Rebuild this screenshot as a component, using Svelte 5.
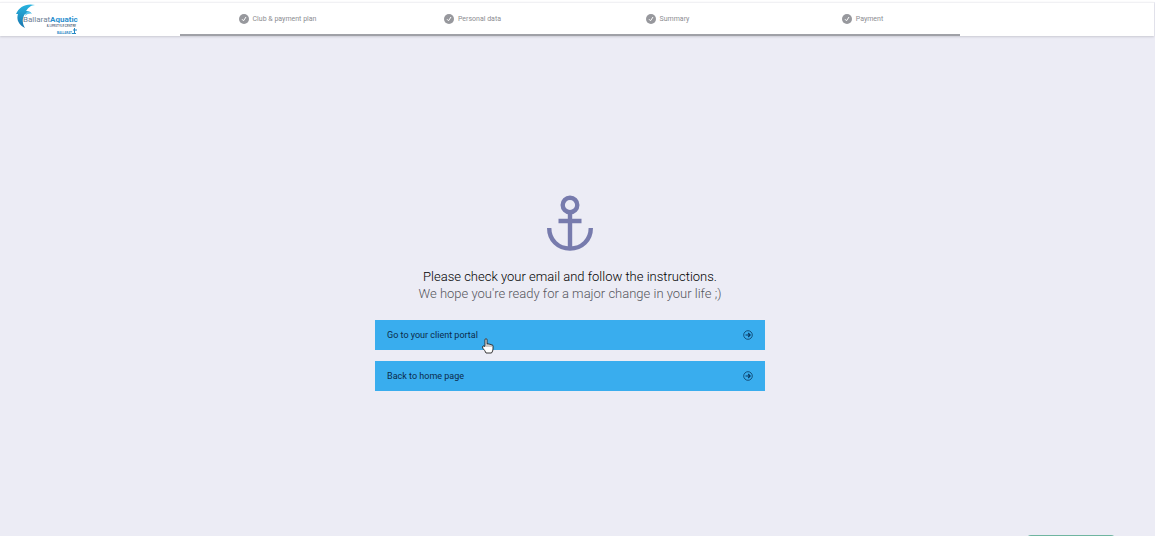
<script>
  const steps = ["Club & payment plan", "Personal data", "Summary", "Payment"];

  const links = [
    { label: "Go to your client portal", href: "#portal", active: true },
    { label: "Back to home page", href: "#home", active: false },
  ];
</script>

<div class="page">
  <header>
    <div class="bar">
      <a class="logo" href="#home" aria-label="Ballarat Aquatic & Lifestyle Centre">
        <svg width="64" height="32" viewBox="0 0 64 32">
          <defs>
            <linearGradient id="wave" x1="0" y1="0" x2="0" y2="1">
              <stop offset="0" stop-color="#27b4e0" />
              <stop offset="1" stop-color="#1874ad" />
            </linearGradient>
          </defs>
          <path
            d="M20 1 C11 -1 4 3 1 10 L3 10 C1 16 4 21 10 24 C7 19 7 14 10 10 L16 9 C14 7 12 7 11 7 C13 4 16 1 20 1Z"
            fill="url(#wave)"
          />
          <path d="M11 9 C13 7 15 7 17 10 C14 9 12 10 10 12Z" fill="#5cc4ea" />
          <text class="name" x="8" y="18">Ballarat<tspan class="strong">Aquatic</tspan></text>
          <text class="sub" x="61" y="23" text-anchor="end">&amp; LIFESTYLE CENTRE</text>
          <text class="city" x="42" y="30">BALLARAT</text>
          <path d="M59.5 24v5M58 26h4M57 29.5h4" stroke="#2889c5" fill="none" />
        </svg>
      </a>
      <ol class="steps">
        {#each steps as step}
          <li>
            <svg width="10" height="10" viewBox="0 0 10 10" aria-hidden="true">
              <circle cx="5" cy="5" r="5" fill="#97989d" />
              <path d="M3 5.2 L4.5 6.8 L7 3" fill="none" stroke="#fff" />
            </svg>
            <span>{step}</span>
          </li>
        {/each}
      </ol>
    </div>
  </header>

  <main>
    <svg class="anchor" width="48" height="56" viewBox="0 0 48 56" aria-hidden="true">
      <g fill="none" stroke="#777bad" stroke-width="4.4">
        <circle cx="24" cy="10" r="7.3" />
        <path d="M24 17 V54 M12.5 26 H35.5" />
        <path d="M3.2 33 C3.2 45 12 53.6 24 53.6 S44.8 45 44.8 33" />
      </g>
    </svg>

    <h1>Please check your email and follow the instructions.</h1>
    <p>We hope you're ready for a major change in your life ;)</p>

    <nav>
      {#each links as link}
        <a class="link" href={link.href}>
          <span class="label">
            {link.label}
            {#if link.active}
              <svg class="pointer" width="12" height="16" viewBox="0 0 12 16" aria-hidden="true">
                <path
                  d="M3 8.5 V2 Q3 .6 4 .6 T5 2 V6 Q6 5.2 7 6.3 Q8 5.6 9 6.8 Q10.8 6.3 11 8 V11 Q11 13 9.5 15 H4 Q3 12.5 1 10.5 Q0 8.8 1 8 Q2 7.6 3 8.5Z"
                  fill="#fff"
                  stroke="#222"
                  stroke-width=".9"
                />
                <path d="M5 6v3M7 6.5v2.5M9 7v2" stroke="#555" stroke-width=".6" />
              </svg>
            {/if}
          </span>
          <svg width="10" height="10" viewBox="0 0 10 10" aria-hidden="true">
            <g fill="none" stroke="#0b3a63">
              <circle cx="5" cy="5" r="4.3" stroke-width=".8" />
              <path d="M2.5 5 H7 M5.2 3 L7.2 5 L5.2 7" stroke-width="1.1" />
            </g>
          </svg>
        </a>
      {/each}
    </nav>
  </main>

  <button class="chat" aria-label="Open chat"></button>
</div>

<style>
  :global(body) {
    background: #ececf5;
    font-family: Roboto, "Liberation Sans", sans-serif;
  }
  .page {
    display: flex;
    flex-direction: column;
    min-height: 100vh;
    box-sizing: border-box;
    border-top: 2px solid #fff;
  }
  header {
    margin-right: 1px;
    padding-right: 14px;
    background: #fff;
    border-top: 1px solid #f1f1f4;
    box-shadow: 0 1px 2px #c9c9d2;
  }
  .bar {
    display: grid;
    grid-template-columns: 3fr 13fr 3fr;
  }
  .logo {
    display: flex;
    align-items: center;
    padding-left: 15px;
  }
  .name {
    font-size: 8px;
    fill: #6f7f96;
  }
  .strong {
    font-weight: 700;
    fill: #2b8fcf;
  }
  .sub {
    font-size: 3px;
    font-weight: 500;
    fill: #4a5d78;
  }
  .city {
    font-size: 3px;
    font-weight: 700;
    fill: #2889c5;
  }
  .steps {
    display: grid;
    grid-template-columns: repeat(4, 1fr);
    height: 31px;
    margin: 0;
    padding: 0;
    list-style: none;
    border-bottom: 2px solid #a0a1a7;
  }
  .steps li {
    display: flex;
    align-items: center;
    justify-content: center;
    gap: 4px;
    padding-top: 1px;
    font-size: 7px;
    color: #8c8d92;
  }
  main {
    flex: 1;
    display: flex;
    flex-direction: column;
    align-items: center;
    justify-content: center;
    padding: 13px 15px 0 0;
    text-align: center;
  }
  .anchor {
    margin-bottom: 17px;
  }
  h1,
  p {
    margin: 0;
    font-size: 13px;
    font-weight: 300;
    line-height: 17px;
  }
  h1 {
    color: #000;
  }
  p {
    color: #55565c;
  }
  nav {
    display: flex;
    flex-direction: column;
    gap: 11px;
    width: 34.2%;
    min-width: 260px;
    margin-top: 18px;
  }
  .link {
    display: flex;
    align-items: center;
    justify-content: space-between;
    height: 30px;
    padding: 0 12px;
    background: #39adee;
    color: #0b2b4a;
    font-size: 9px;
    text-decoration: none;
  }
  .label {
    position: relative;
  }
  .pointer {
    position: absolute;
    top: 8px;
    left: calc(100% + 4px);
  }
  .chat {
    position: fixed;
    right: 40px;
    bottom: -31px;
    width: 88px;
    height: 32px;
    padding: 0;
    border: none;
    border-radius: 4px;
    background: #6fb5a0;
  }
</style>
